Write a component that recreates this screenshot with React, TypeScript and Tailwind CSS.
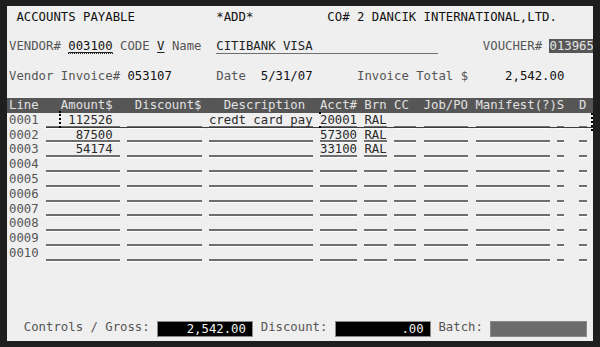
import type { ReactNode } from 'react';

const ROW = 'relative h-[14.78px] whitespace-pre pl-[2px] leading-[14.78px]';

interface LineItem {
  no: string;
  amount?: string;
  desc?: string;
  acct?: string;
  brn?: string;
}

const items: LineItem[] = [
  { no: '0001', amount: '   112526 ', desc: 'credt card pay', acct: '20001', brn: 'RAL' },
  { no: '0002', amount: '    87500 ', acct: '57300', brn: 'RAL' },
  { no: '0003', amount: '    54174 ', acct: '33100', brn: 'RAL' },
  { no: '0004' },
  { no: '0005' },
  { no: '0006' },
  { no: '0007' },
  { no: '0008' },
  { no: '0009' },
  { no: '0010' },
];

function pad(value: string | undefined, size: number) {
  return (value ?? '').padEnd(size, ' ');
}

function Field({ children }: { children: ReactNode }) {
  return (
    <span className="inline-block h-[14.78px] border-b-2 border-[#6e6e6e] align-top text-[#2a2a2a] shadow-[0_1px_0_#ffffff]">
      {children}
    </span>
  );
}

function Label({ children }: { children: ReactNode }) {
  return <span className="text-[#555555]">{children}</span>;
}

function Value({ children }: { children: ReactNode }) {
  return <span className="text-[#111111]">{children}</span>;
}

function TotalBox({ children, dim }: { children: ReactNode; dim?: boolean }) {
  return (
    <span
      className={
        dim
          ? 'relative top-[1px] inline-block h-[16px] bg-[#6b6b6b] align-top leading-[16px] text-[#eeeeee] shadow-[inset_0_0_0_1px_#8a8a8a]'
          : 'relative top-[1px] inline-block h-[16px] bg-black align-top leading-[16px] text-[#f2f2f2] shadow-[inset_0_0_0_1px_#8a8a8a]'
      }
    >
      {children}
    </span>
  );
}

function ItemRow({ item, first }: { item: LineItem; first: boolean }) {
  return (
    <div className={ROW}>
      <Label>{item.no}</Label>
      {' '}
      <Field>{pad(item.amount, 10)}</Field>
      {' '}
      <Field>{pad('', 10)}</Field>
      {' '}
      <Field>{pad(item.desc, 14)}</Field>
      {' '}
      <Field>{pad(item.acct, 5)}</Field>
      {' '}
      <Field>{pad(item.brn, 3)}</Field>
      {' '}
      <Field>{pad('', 3)}</Field>
      {' '}
      <Field>{pad('', 6)}</Field>
      {' '}
      <Field>{pad('', 10)}</Field>
      {' '}
      <Field> </Field>
      {'  '}
      <Field> </Field>
      {first && (
        <>
          <span className="absolute left-[39px] right-0 top-[14.4px] h-px bg-[#3c3c3c]" />
          <span className="absolute left-[52px] top-[-2px] h-[17px] border-l-2 border-dotted border-black" />
          <span className="absolute left-[312px] top-[-1px] h-[2px] w-[2px] bg-black" />
          <span className="absolute left-[312px] top-[13px] h-[2px] w-[2px] bg-black" />
          <span className="absolute right-0 top-0 h-[18px] border-r-2 border-dotted border-black" />
        </>
      )}
    </div>
  );
}

export default function App() {
  return (
    <div className="h-[347px] w-[600px] bg-[#1e1e1e] px-[7px] py-[6px] font-['DejaVu_Sans_Mono','Liberation_Mono',monospace] text-[12.3px]">
      <div className="h-[335px] overflow-hidden bg-[#efefef] pt-[3.6px] text-[#333333]">
        <div className={ROW}>
          <Value>{' ACCOUNTS PAYABLE           *ADD*          CO# 2 DANCIK INTERNATIONAL,LTD.'}</Value>
        </div>
        <div className={ROW} />
        <div className={ROW}>
          <Label>VENDOR#</Label>
          {' '}
          <span className="inline-block h-[14.78px] border-b border-dotted border-[#222222] align-top text-[#111111] underline decoration-[#222222] underline-offset-2">
            003100
          </span>
          <Label> CODE </Label>
          <span className="text-[#111111] underline decoration-[#222222] underline-offset-2">V</span>
          <Label> Name  </Label>
          <span className="inline-block h-[14.78px] border-b-[1.5px] border-[#6e6e6e] align-top text-[#222222]">
            {pad('CITIBANK VISA', 30)}
          </span>
          {'      '}
          <Label>VOUCHER#</Label>
          {' '}
          <span className="bg-[#575757] text-[#e6e6e6]">013965</span>
        </div>
        <div className={ROW} />
        <div className={ROW}>
          <Label>Vendor Invoice# </Label>
          <Value>053107</Value>
          {'      '}
          <Label>Date  </Label>
          <Value>5/31/07</Value>
          {'      '}
          <Label>Invoice Total $</Label>
          {'     '}
          <Value>2,542.00</Value>
        </div>
        <div className={ROW} />
        <div className={`${ROW} bg-[#565656] text-[#e2e2e2]`}>
          {'Line   Amount$   Discount$   Description  Acct# Brn CC  Job/PO Manifest(?)S  D'}
        </div>
        {items.map((item, index) => (
          <ItemRow key={item.no} item={item} first={index === 0} />
        ))}
        <div className={ROW} />
        <div className={ROW} />
        <div className={ROW} />
        <div className={ROW} />
        <div className={ROW}>
          <Label>{'  Controls / Gross: '}</Label>
          <TotalBox>{'    2,542.00 '}</TotalBox>
          {' '}
          <Label>Discount: </Label>
          <TotalBox>{'         .00 '}</TotalBox>
          {' '}
          <Label>Batch: </Label>
          <TotalBox dim>{pad('', 13)}</TotalBox>
        </div>
      </div>
    </div>
  );
}
